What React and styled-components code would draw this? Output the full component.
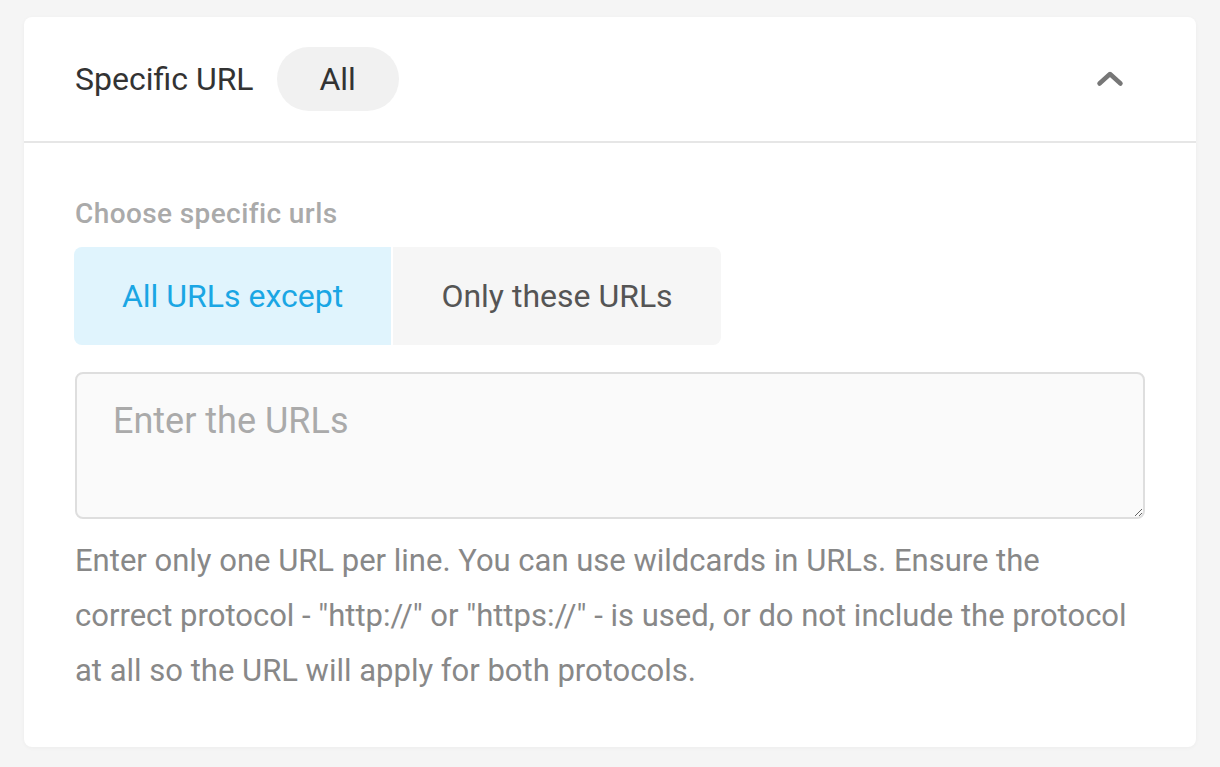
import React, { useState } from 'react';
import styled, { createGlobalStyle } from 'styled-components';

const GlobalStyle = createGlobalStyle`
  html, body {
    margin: 0;
    padding: 0;
    background: #f5f5f5;
    font-family: Roboto, "Liberation Sans", sans-serif;
  }
  * { box-sizing: border-box; }
`;

const Page = styled.div`
  padding: 17px 24px 20px;
`;

const Card = styled.section`
  background: #fff;
  border-radius: 8px;
  box-shadow: 0 1px 4px rgba(0, 0, 0, 0.04);
  height: 730px;
`;

const Header = styled.div`
  display: flex;
  align-items: center;
  height: 126px;
  padding: 0 72px 0 51px;
  border-bottom: 2px solid #e6e6e6;
`;

const Title = styled.h2`
  margin: 0;
  font-size: 32px;
  font-weight: 400;
  color: #333;
`;

const Pill = styled.span`
  display: inline-flex;
  align-items: center;
  justify-content: center;
  margin-left: 23px;
  width: 122px;
  height: 64px;
  border-radius: 32px;
  background: #f1f1f1;
  font-size: 32px;
  color: #333;
`;

const Toggle = styled.button`
  margin-left: auto;
  border: 0;
  background: none;
  padding: 0;
  display: flex;
  cursor: pointer;
`;

const Body = styled.div`
  padding: 57px 51px 0;
`;

const Label = styled.div`
  font-size: 28px;
  font-weight: 500;
  letter-spacing: 0.4px;
  color: #aaa;
  line-height: 28px;
  margin-bottom: 19px;
`;

const Segmented = styled.div`
  display: inline-flex;
  gap: 2px;
  border-radius: 8px;
  overflow: hidden;
  margin-left: -1px;
`;

const Segment = styled.button`
  border: 0;
  height: 98px;
  width: ${p => p.$w}px;
  font-family: inherit;
  font-size: 32px;
  background: ${p => (p.$active ? '#e0f4fd' : '#f6f6f6')};
  color: ${p => (p.$active ? '#1aa6e4' : '#555')};
  cursor: pointer;
`;

const UrlInput = styled.textarea`
  display: block;
  width: 100%;
  height: 147px;
  margin-top: 27px;
  padding: 26px 36px;
  border: 2px solid #dedede;
  border-radius: 8px;
  background: #fafafa;
  font-family: inherit;
  font-size: 36px;
  color: #333;
  resize: vertical;
  outline: none;

  &::placeholder {
    color: #aaa;
  }
`;

const Help = styled.p`
  margin: 14px 0 0;
  padding-right: 12px;
  font-size: 31px;
  line-height: 55px;
  color: #888;
`;

export default function App() {
  const [mode, setMode] = useState('except');
  return (
    <>
      <GlobalStyle />
      <Page>
        <Card>
          <Header>
            <Title>Specific URL</Title>
            <Pill>All</Pill>
            <Toggle aria-label="Collapse">
              <svg width="28" height="18" viewBox="0 0 28 18">
                <path d="M3.5 13.5 L14 4 L24.5 13.5" fill="none" stroke="#777" strokeWidth="4.5" strokeLinecap="round" strokeLinejoin="round" />
              </svg>
            </Toggle>
          </Header>
          <Body>
            <Label>Choose specific urls</Label>
            <Segmented>
              <Segment $w={317} $active={mode === 'except'} onClick={() => setMode('except')}>
                All URLs except
              </Segment>
              <Segment $w={328} $active={mode === 'only'} onClick={() => setMode('only')}>
                Only these URLs
              </Segment>
            </Segmented>
            <UrlInput placeholder="Enter the URLs" />
            <Help>
              Enter only one URL per line. You can use wildcards in URLs. Ensure the correct protocol - "http://" or "https://" - is used, or do not include the protocol at all so the URL will apply for both protocols.
            </Help>
          </Body>
        </Card>
      </Page>
    </>
  );
}
